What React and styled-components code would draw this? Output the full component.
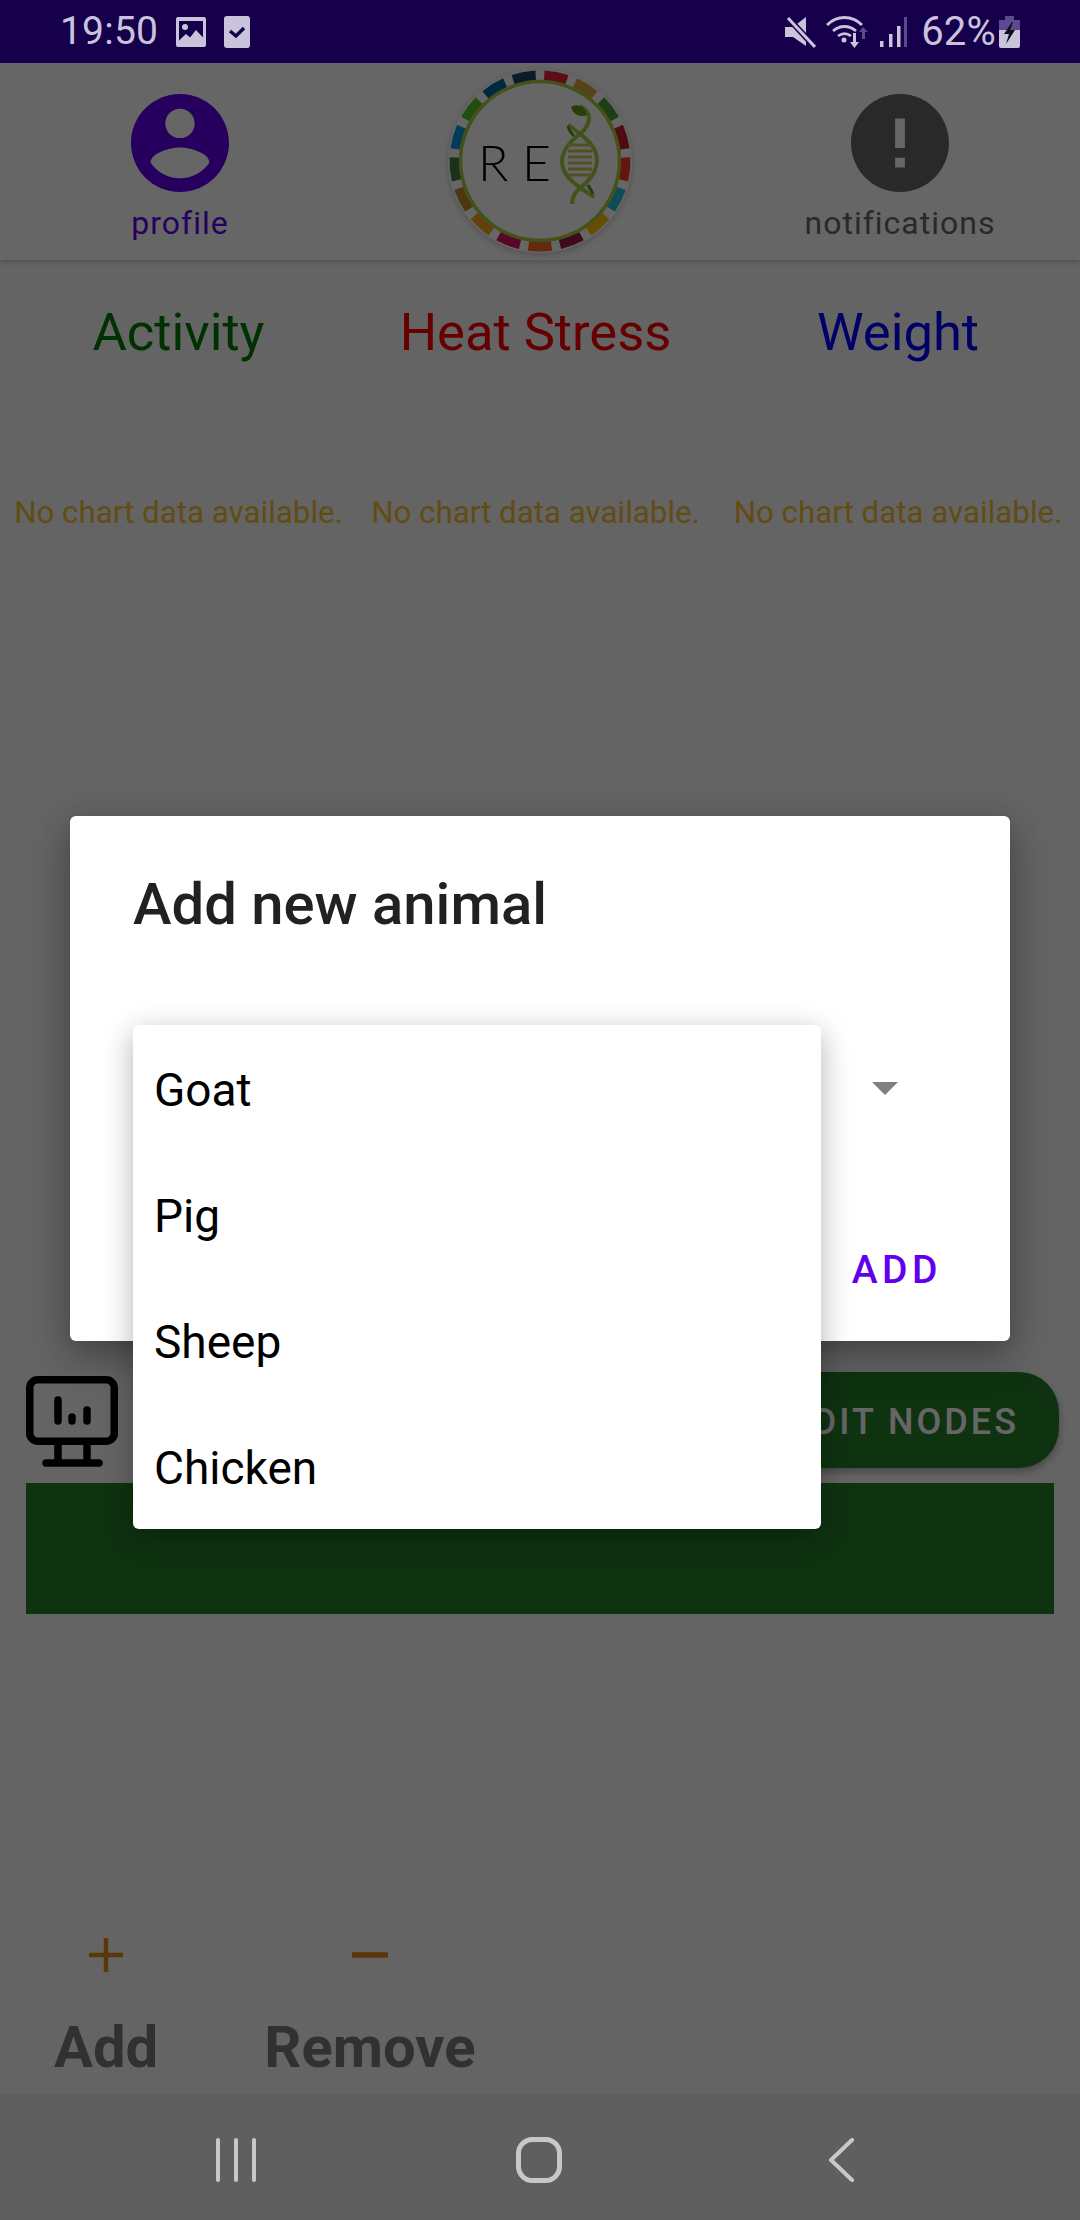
import React from 'react';
import styled, { createGlobalStyle } from 'styled-components';

const GlobalStyle = createGlobalStyle`
  html, body {
    margin: 0;
    padding: 0;
    background: #fafafa;
    font-family: Roboto, 'Liberation Sans', sans-serif;
  }
  * {
    box-sizing: border-box;
  }
`;

const Screen = styled.div`
  width: 1080px;
  height: 2220px;
  display: flex;
  flex-direction: column;
  overflow: hidden;
`;

const StatusBar = styled.div`
  height: 63px;
  flex: none;
  display: flex;
  align-items: center;
  justify-content: space-between;
  padding: 0 60px 0 60px;
  background: #16004c;
  color: #c9c4dc;
`;

const StatusGroup = styled.div`
  display: flex;
  align-items: center;
  gap: ${props => props.$gap}px;
`;

const StatusText = styled.span`
  font-size: ${props => props.$size}px;
  line-height: 63px;
  letter-spacing: 0.2px;
  margin: -1px ${props => props.$right || 0}px 0 ${props => props.$left || 0}px;
`;

const Main = styled.div`
  flex: 1;
  position: relative;
  display: flex;
  flex-direction: column;
  background: #fafafa;
`;

const Header = styled.header`
  height: 197px;
  flex: none;
  display: grid;
  grid-template-columns: repeat(3, 360px);
  background: #fff;
  box-shadow: 0 2px 6px rgba(0, 0, 0, 0.2);
`;

const NavItem = styled.div`
  display: flex;
  flex-direction: column;
  align-items: center;
  padding-top: 31px;
  gap: 13px;
  color: ${props => props.$color};
`;

const NavLabel = styled.span`
  font-size: 32px;
  line-height: 36px;
  letter-spacing: 1px;
`;

const LogoCell = styled.div`
  display: flex;
  align-items: center;
  justify-content: center;
`;

const LogoDisc = styled.div`
  width: 184px;
  height: 184px;
  margin-top: -2px;
  border-radius: 50%;
  background: #fff;
  box-shadow: 0 2px 6px rgba(0, 0, 0, 0.22);
`;

const ChartGrid = styled.section`
  display: grid;
  grid-template-columns: 357px 357px 368px;
  padding-top: 40px;
`;

const ChartColumn = styled.div`
  display: flex;
  flex-direction: column;
  align-items: center;
`;

const ChartTitle = styled.h2`
  margin: 0;
  font-size: 52.5px;
  line-height: 64px;
  font-weight: 400;
  color: ${props => props.$color};
`;

const NoData = styled.p`
  margin: 131px 0 0;
  font-size: 31.3px;
  line-height: 36px;
  white-space: nowrap;
  color: #f7bd33;
`;

const NodesRow = styled.div`
  display: flex;
  align-items: center;
  justify-content: space-between;
  margin-top: 841px;
  padding: 0 21px 0 26px;
`;

const MonitorSlot = styled.div`
  display: flex;
  padding-top: 3px;
`;

const EditButton = styled.button`
  width: 400px;
  height: 96px;
  padding: 3px 40px 0 0;
  border: 0;
  border-radius: 40px;
  text-align: right;
  background: #267f2b;
  color: #fff;
  font-family: inherit;
  font-size: 36px;
  font-weight: 500;
  letter-spacing: 3px;
  box-shadow: 0 4px 8px rgba(0, 0, 0, 0.3);
`;

const GreenBar = styled.div`
  height: 131px;
  margin: 15px 26px 0;
  background: #267f2b;
`;

const Actions = styled.div`
  display: flex;
  gap: 106px;
  margin-top: auto;
  padding: 0 0 13px 54px;
`;

const ActionColumn = styled.div`
  display: flex;
  flex-direction: column;
  align-items: center;
  gap: 40px;
`;

const ActionLabel = styled.span`
  font-size: 58px;
  line-height: 68px;
  font-weight: 700;
  color: #7a7a7a;
`;

const Scrim = styled.div`
  position: absolute;
  inset: 0;
  display: flex;
  align-items: center;
  justify-content: center;
  background: rgba(0, 0, 0, 0.6);
`;

const Dialog = styled.div`
  position: relative;
  width: 940px;
  height: 525px;
  display: flex;
  flex-direction: column;
  padding: 53px 68px 49px 63px;
  border-radius: 6px;
  background: #fff;
  box-shadow: 0 16px 40px rgba(0, 0, 0, 0.25), 0 6px 30px rgba(0, 0, 0, 0.15);
`;

const DialogTitle = styled.h3`
  margin: 0;
  font-size: 58px;
  line-height: 70px;
  font-weight: 500;
  color: #212121;
`;

const SelectArrow = styled.div`
  align-self: flex-end;
  width: 0;
  height: 0;
  margin: 143px 44px 0 0;
  border-left: 13px solid transparent;
  border-right: 13px solid transparent;
  border-top: 13px solid #808080;
`;

const DialogAction = styled.button`
  align-self: flex-end;
  margin-top: auto;
  padding: 0;
  border: 0;
  background: none;
  color: #6200ee;
  font-family: inherit;
  font-size: 39px;
  line-height: 44px;
  font-weight: 500;
  letter-spacing: 4.5px;
`;

const Menu = styled.ul`
  position: absolute;
  top: 209px;
  left: 63px;
  width: 688px;
  margin: 0;
  padding: 0;
  list-style: none;
  border-radius: 6px;
  background: #fff;
  box-shadow: 0 8px 30px rgba(0, 0, 0, 0.3);
`;

const MenuItem = styled.li`
  height: 126px;
  display: flex;
  align-items: center;
  padding: 3px 21px 0;
  font-size: 46px;
  color: #000;
`;

const NavBar = styled.nav`
  height: 126px;
  flex: none;
  display: grid;
  grid-template-columns: 472px 150px 1fr;
  align-items: center;
  padding-top: 6px;
  background: #5f5f5f;
`;

const NavIconCell = styled.div`
  display: flex;
  padding-left: ${props => props.$left}px;
`;

const ImageIcon = () => (
  <svg width="30" height="30" viewBox="0 0 30 30">
    <path fill="#c9c4dc" fillRule="evenodd" d="M2 0h26a2 2 0 0 1 2 2v26a2 2 0 0 1-2 2H2a2 2 0 0 1-2-2V2a2 2 0 0 1 2-2zM3 23.500l7-6.500 4 3.500 6-7.500 7 7.500V4H3zM9 7a3 3 0 1 1 0 6 3 3 0 0 1 0-6z" />
  </svg>
);

const CheckIcon = () => (
  <svg width="26" height="32" viewBox="0 0 26 32">
    <rect width="26" height="32" rx="3" fill="#c9c4dc" />
    <path d="M6 15l6 5 8-8" fill="none" stroke="#16004c" strokeWidth="3.500" />
  </svg>
);

const MuteIcon = () => (
  <svg width="31" height="32" viewBox="0 0 31 32">
    <path fill="#c9c4dc" d="M0 11h8l13-10v13L21 30 8 21H0z" />
    <path d="M3 2l27 29" stroke="#16004c" strokeWidth="6" />
    <path d="M3 2l27 29" stroke="#c9c4dc" strokeWidth="3" />
  </svg>
);

const WifiIcon = () => (
  <svg width="44" height="34" viewBox="0 0 44 34">
    <g fill="none" stroke="#c9c4dc" strokeWidth="2.800">
      <path d="M1 10c10-10 25-10 35 0" />
      <path d="M7 16c7-6 16-6 23 0" />
      <path d="M12 21c4-3 9-3 13 0" />
    </g>
    <circle cx="18" cy="25" r="2.500" fill="#c9c4dc" />
    <path d="M27 18h3v9h3l-4.500 6-4.500-6h3z" fill="#c9c4dc" />
    <path d="M36 24v-7h-3l4-5 5 5h-3v7z" fill="#5b4a8f" />
  </svg>
);

const SignalIcon = () => (
  <svg width="27" height="30" viewBox="0 0 27 30">
    <rect x="0" y="24" width="3.500" height="6" fill="#c9c4dc" />
    <rect x="9" y="17" width="3.500" height="13" fill="#c9c4dc" />
    <rect x="17" y="9" width="3.500" height="21" fill="#c9c4dc" />
    <rect x="24" y="0" width="3" height="30" fill="#5b4a8f" />
  </svg>
);

const BatteryIcon = () => (
  <svg width="21" height="32" viewBox="0 0 21 32">
    <path fill="#5b4a8f" d="M6 0h9v4h6v10H0V4h6z" />
    <path fill="#c9c4dc" d="M0 14h21v16a2 2 0 0 1-2 2H2a2 2 0 0 1-2-2z" />
    <path fill="#0d0d1a" d="M13 6L5 18h5l-3 10 9-14h-5l3-8z" />
  </svg>
);

const ProfileIcon = () => (
  <svg width="98" height="98" viewBox="2 2 20 20">
    <path fill="#6200ee" d="M12 2C6.480 2 2 6.480 2 12s4.480 10 10 10 10-4.480 10-10S17.520 2 12 2zm0 3c1.660 0 3 1.340 3 3s-1.340 3-3 3-3-1.340-3-3 1.340-3 3-3zm0 14.200c-2.500 0-4.710-1.280-6-3.220.03-1.990 4-3.080 6-3.080 1.990 0 5.970 1.090 6 3.080-1.290 1.940-3.500 3.220-6 3.220z" />
  </svg>
);

const AlertIcon = () => (
  <svg width="98" height="98" viewBox="2 2 20 20">
    <path fill="#666666" d="M12 2C6.480 2 2 6.480 2 12s4.480 10 10 10 10-4.480 10-10S17.520 2 12 2zm1 15h-2v-2h2v2zm0-4h-2V7h2v6z" />
  </svg>
);

const sdgColors = ['#e5243b', '#dda63a', '#4c9f38', '#c5192d', '#ff3a21', '#26bde2', '#fcc30b', '#a21942', '#fd6925', '#dd1367', '#fd9d24', '#bf8b2e', '#3f7e44', '#0a97d9', '#56c02b', '#00689d', '#19486a'];

// one ring tile per goal, going clockwise from twelve o'clock
const ringSegment = (index) => {
  const step = (2 * Math.PI) / sdgColors.length;
  const start = index * step + 0.05;
  const end = (index + 1) * step - 0.05;
  const r = 85;
  const x1 = 94 + r * Math.sin(start);
  const y1 = 94 - r * Math.cos(start);
  const x2 = 94 + r * Math.sin(end);
  const y2 = 94 - r * Math.cos(end);
  return `M${x1} ${y1}A${r} ${r} 0 0 1 ${x2} ${y2}`;
};

const Logo = () => (
  <svg width="184" height="184" viewBox="2 2 184 184">
    <g fill="none" strokeWidth="11">
      {sdgColors.map((color, i) => (
        <path key={color} d={ringSegment(i)} stroke={color} />
      ))}
    </g>
    <circle cx="94" cy="94" r="79.500" fill="#fff" stroke="#a8cc40" strokeWidth="3.500" />
    <text x="32" y="114" fontFamily="Lato, sans-serif" fontWeight="300" fontSize="50" fill="#000">R</text>
    <text x="76" y="114" fontFamily="Lato, sans-serif" fontWeight="300" fontSize="50" fill="#000">E</text>
    <g fill="none" stroke="#a8cc40" strokeWidth="4">
      <path d="M134 39c12 6 12 17 0 28-12 9-18 17-18 27s6 18 16 25 13 9 16 11" />
      <path d="M126 137c0-10 6-14 14-21 9-9 11-16 11-23 0-9-5-16-13-23-8-6-14-11-16-12" />
    </g>
    <g stroke="#c8c860" strokeWidth="3">
      {[78, 84, 90, 96, 102, 108].map((y) => (
        <path key={y} d={`M122 ${y}h24`} />
      ))}
    </g>
    <path d="M125 40c6-4 14-1 16 8-8 3-14-1-16-8z" fill="#5f9a20" />
    <path d="M122 59c1 5 4 8 6 10" fill="none" stroke="#5f9a20" strokeWidth="3" />
    <path d="M142 118c2 4 4 6 5 9" fill="none" stroke="#5f9a20" strokeWidth="3" />
  </svg>
);

const MonitorIcon = () => (
  <svg width="92" height="91" viewBox="0 0 92 91">
    <g fill="none" stroke="#000" strokeWidth="7.500" strokeLinecap="round">
      <rect x="3.750" y="3.750" width="84.500" height="61.500" rx="8" />
      <path d="M32 66v20M61 66v20M20 87h53" />
      <path d="M32 24v21M46 41v4M61 34v11" />
    </g>
  </svg>
);

const PlusIcon = () => (
  <svg width="36" height="36" viewBox="0 0 36 36">
    <path d="M18 1v34M1 18h34" stroke="#e08a13" strokeWidth="4.500" />
  </svg>
);

const MinusIcon = () => (
  <svg width="36" height="36" viewBox="0 0 36 36">
    <path d="M0 18h36" stroke="#e08a13" strokeWidth="5.500" />
  </svg>
);

const RecentsIcon = () => (
  <svg width="40" height="44" viewBox="0 0 40 44">
    <path d="M2 2v40M20 2v40M38 2v40" stroke="#c8c8c8" strokeWidth="4" strokeLinecap="round" />
  </svg>
);

const HomeIcon = () => (
  <svg width="46" height="46" viewBox="0 0 46 46">
    <rect x="2.500" y="2.500" width="41" height="41" rx="14" fill="none" stroke="#c8c8c8" strokeWidth="5" />
  </svg>
);

const BackIcon = () => (
  <svg width="26" height="44" viewBox="0 0 26 44">
    <path d="M24 2L3 22l21 20" fill="none" stroke="#c8c8c8" strokeWidth="4" strokeLinecap="round" strokeLinejoin="round" />
  </svg>
);

const charts = [
  { title: 'Activity', color: '#007a00' },
  { title: 'Heat Stress', color: '#ff0000' },
  { title: 'Weight', color: '#0000ff' },
];

const animals = ['Goat', 'Pig', 'Sheep', 'Chicken'];

export default function App() {
  return (
    <Screen>
      <GlobalStyle />
      <StatusBar>
        <StatusGroup $gap={18}>
          <StatusText $size={39}>19:50</StatusText>
          <ImageIcon />
          <CheckIcon />
        </StatusGroup>
        <StatusGroup $gap={10}>
          <MuteIcon />
          <WifiIcon />
          <SignalIcon />
          <StatusText $size={40} $left={4} $right={-7}>62%</StatusText>
          <BatteryIcon />
        </StatusGroup>
      </StatusBar>

      <Main>
        <Header>
          <NavItem $color="#6200ee">
            <ProfileIcon />
            <NavLabel>profile</NavLabel>
          </NavItem>
          <LogoCell>
            <LogoDisc>
              <Logo />
            </LogoDisc>
          </LogoCell>
          <NavItem $color="#666666">
            <AlertIcon />
            <NavLabel>notifications</NavLabel>
          </NavItem>
        </Header>

        <ChartGrid>
          {charts.map((chart) => (
            <ChartColumn key={chart.title}>
              <ChartTitle $color={chart.color}>{chart.title}</ChartTitle>
              <NoData>No chart data available.</NoData>
            </ChartColumn>
          ))}
        </ChartGrid>

        <NodesRow>
          <MonitorSlot>
            <MonitorIcon />
          </MonitorSlot>
          <EditButton>EDIT NODES</EditButton>
        </NodesRow>
        <GreenBar />

        <Actions>
          <ActionColumn>
            <PlusIcon />
            <ActionLabel>Add</ActionLabel>
          </ActionColumn>
          <ActionColumn>
            <MinusIcon />
            <ActionLabel>Remove</ActionLabel>
          </ActionColumn>
        </Actions>

        <Scrim>
          <Dialog>
            <DialogTitle>Add new animal</DialogTitle>
            <SelectArrow />
            <DialogAction>ADD</DialogAction>
            <Menu>
              {animals.map((animal) => (
                <MenuItem key={animal}>{animal}</MenuItem>
              ))}
            </Menu>
          </Dialog>
        </Scrim>
      </Main>

      <NavBar>
        <NavIconCell $left={216}>
          <RecentsIcon />
        </NavIconCell>
        <NavIconCell $left={44}>
          <HomeIcon />
        </NavIconCell>
        <NavIconCell $left={206}>
          <BackIcon />
        </NavIconCell>
      </NavBar>
    </Screen>
  );
}
